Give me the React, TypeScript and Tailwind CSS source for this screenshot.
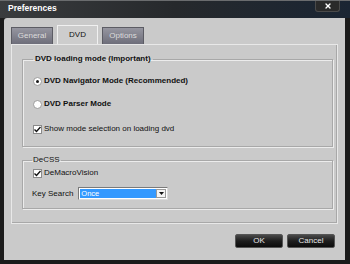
import { X } from 'lucide-react';

function Radio({ checked, label }: { checked?: boolean; label: string }) {
  return (
    <div className="flex items-center gap-[2px] h-[12px]">
      <span className="w-[9px] h-[9px] rounded-full bg-white border border-[#9c9c9c] flex items-center justify-center">
        {checked && <span className="w-[3px] h-[3px] rounded-full bg-[#1a1a1a]" />}
      </span>
      <span className="font-bold text-[#111] text-[8px]">{label}</span>
    </div>
  );
}

function Check({ label }: { label: string }) {
  return (
    <div className="flex items-center gap-[2px] h-[12px]">
      <span className="w-[9px] h-[9px] bg-white border border-[#8a8a8a] flex items-center justify-center">
        <svg width="7" height="7" viewBox="0 0 7 7">
          <path d="M0.5 3.5 L2.5 5.5 L6.5 1" stroke="#111" strokeWidth="1.4" fill="none" />
        </svg>
      </span>
      <span className="text-[#111] text-[8px]">{label}</span>
    </div>
  );
}

export default function App() {
  return (
    <div className="w-[350px] h-[264px] bg-[#1b1b1b] flex flex-col text-[8px] font-['Liberation_Sans',sans-serif] overflow-hidden">
      <div className="h-[18px] flex justify-between items-start bg-gradient-to-r from-[#3a3c3e] via-[#26292c] to-[#1a2533] border-t border-[#6a6c6e]">
        <span className="pl-[8px] pt-[1px] text-white font-bold text-[8.5px]">Preferences</span>
        <span className="mr-[10px] w-[25px] h-[11px] bg-[#2a2a2a] rounded-b-[3px] border border-t-0 border-[#4a4a4a] flex items-center justify-center">
          <X size={8} strokeWidth={4} color="#fff" />
        </span>
      </div>

      <div className="flex-1 ml-[4px] mr-[5px] mb-[4px] bg-[#cacaca] rounded-tl-[3px] flex flex-col">
        <div className="flex items-end gap-[4px] pl-[7px] pt-[7px]">
          <div className="w-[42px] h-[17px] flex items-center justify-center bg-gradient-to-b from-[#9696a0] to-[#6e6e7a] border border-[#5c5c64] border-b-0 text-[#dcdcdc]">General</div>
          <div className="w-[41px] h-[19px] flex items-center justify-center bg-[#cdcdcd] border border-[#f0f0f0] border-b-0 text-[#111]">DVD</div>
          <div className="w-[42px] h-[17px] flex items-center justify-center bg-gradient-to-b from-[#9696a0] to-[#6e6e7a] border border-[#5c5c64] border-b-0 text-[#dcdcdc]">Options</div>
        </div>

        <div className="mx-[7px] h-[180px] border border-[#e8e8e8] shadow-[inset_-1px_-1px_0_#a8a8a8] pl-[10px] pr-[4px]">
          <fieldset className="mt-[8px] h-[94px] border border-[#a8a8a8] shadow-[inset_1px_1px_0_#ececec,1px_1px_0_#ececec] pl-[10px]">
            <legend className="px-[2px] font-bold text-[#111] text-[8px] leading-[12px]">DVD loading mode (Important)</legend>
            <div className="flex flex-col mt-[10px] gap-[11px]">
              <Radio checked label="DVD Navigator Mode (Recommended)" />
              <Radio label="DVD Parser Mode" />
              <div className="mt-[2px]">
                <Check label="Show mode selection on loading dvd" />
              </div>
            </div>
          </fieldset>

          <fieldset className="mt-[7px] h-[55px] border border-[#a8a8a8] shadow-[inset_1px_1px_0_#ececec,1px_1px_0_#ececec] pl-[9px]">
            <legend className="px-[1px] text-[#111] text-[8px] leading-[12px]">DeCSS</legend>
            <div className="pl-[1px] mt-[1px]">
              <Check label="DeMacroVision" />
            </div>
            <div className="flex items-center gap-[5px] mt-[8px]">
              <span className="text-[#111]">Key Search</span>
              <div className="w-[90px] h-[13px] bg-white border border-[#7a7a7a] border-r-[#dcdcdc] border-b-[#dcdcdc] flex items-center p-[1px]">
                <div className="flex-1 h-full bg-[#3399ff] text-white text-[7.5px] leading-[10px] pl-[1px]">Once</div>
                <div className="w-[10px] h-full flex items-center justify-center bg-[#f4f4f4] border border-[#999]">
                  <svg width="5" height="3" viewBox="0 0 5 3"><path d="M0 0h5L2.5 3z" fill="#111" /></svg>
                </div>
              </div>
            </div>
          </fieldset>
        </div>

        <div className="flex justify-end gap-[4px] pr-[10px] mt-[10px]">
          <div className="w-[48px] h-[14px] rounded-[2px] bg-gradient-to-b from-[#4a4a4a] via-[#1e1e1e] to-[#0c0c0c] border border-[#555] text-[#e8e8e8] flex items-center justify-center">OK</div>
          <div className="w-[48px] h-[14px] rounded-[2px] bg-gradient-to-b from-[#4a4a4a] via-[#1e1e1e] to-[#0c0c0c] border border-[#555] text-[#e8e8e8] flex items-center justify-center">Cancel</div>
        </div>
      </div>
    </div>
  );
}
